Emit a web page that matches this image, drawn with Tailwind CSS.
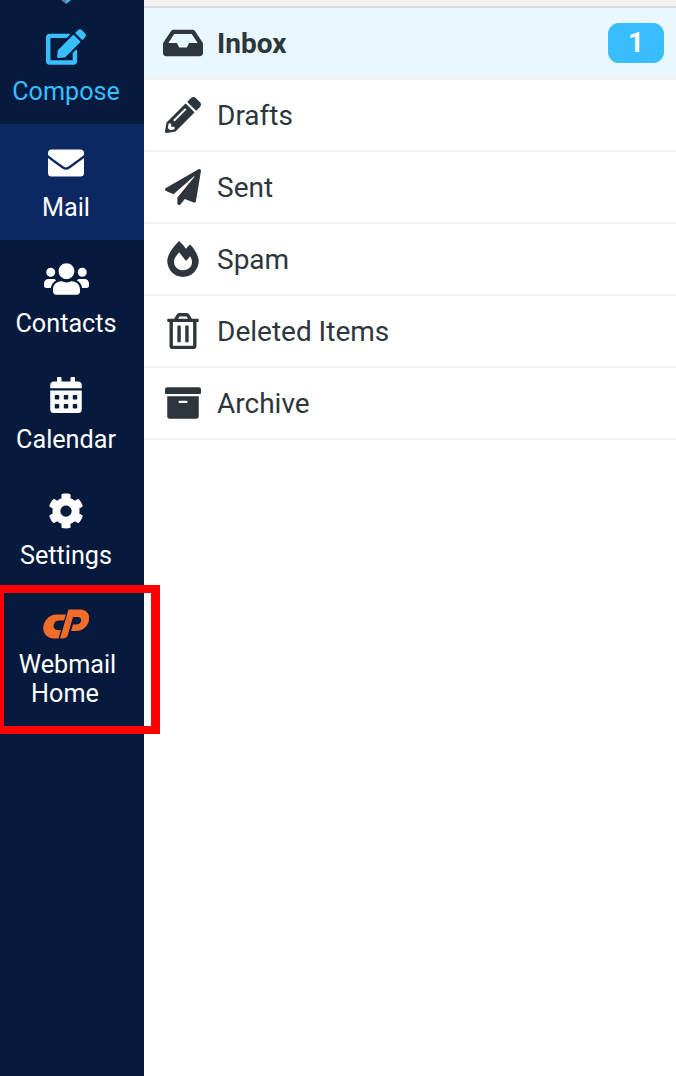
<!doctype html>
<html>
<head>
<meta charset="utf-8">
<script src="https://cdn.jsdelivr.net/npm/@tailwindcss/browser@4"></script>
</head>
<body class="m-0 overflow-hidden bg-white font-['Roboto',sans-serif]">
<div class="relative flex h-[1076px] w-[676px] overflow-hidden">
  <aside class="flex h-full w-[144px] shrink-0 flex-col bg-[#061a3d] pr-[12px] text-[25.2px] leading-[29px] text-white">
    <div class="flex h-2 shrink-0 justify-center">
      <svg class="h-[4px] w-[10px]" viewBox="0 0 10 4"><path d="M0 0h5v4z" fill="#6b7680"/><path d="M5 0h5L5 4z" fill="#38bdff"/></svg>
    </div>
    <a class="flex h-[116px] shrink-0 flex-col items-center pt-[21px] text-[#38bdff]">
      <svg class="h-[36px] w-[40px]" viewBox="0 0 576 512" fill="currentColor"><path d="M402.6 83.2l90.2 90.2c3.8 3.8 3.8 10 0 13.8L274.4 405.6l-92.8 10.3c-12.4 1.4-22.9-9.1-21.5-21.5l10.3-92.8L388.8 83.2c3.8-3.8 10-3.8 13.8 0zm162-22.9l-48.8-48.8c-15.2-15.2-39.9-15.2-55.2 0l-35.4 35.4c-3.8 3.8-3.8 10 0 13.8l90.2 90.2c3.8 3.8 10 3.8 13.8 0l35.4-35.4c15.2-15.3 15.2-40 0-55.2zM384 346.2V448H64V128h229.8c3.2 0 6.2-1.3 8.5-3.5l40-40c7.6-7.6 2.2-20.5-8.5-20.5H48C21.5 64 0 85.5 0 112v352c0 26.5 21.5 48 48 48h352c26.5 0 48-21.5 48-48V306.2c0-10.7-12.9-16-20.5-8.5l-40 40c-2.2 2.3-3.5 5.3-3.5 8.5z"/></svg>
      <span class="mt-[12px]">Compose</span>
    </a>
    <a class="-mr-[12px] flex h-[116px] shrink-0 flex-col items-center bg-[#0c2862] pr-[12px] pt-[21px]">
      <svg class="h-[36px] w-[36px]" viewBox="0 0 512 512" fill="currentColor"><path d="M502.3 190.8c3.9-3.1 9.7-.2 9.7 4.7V400c0 26.5-21.5 48-48 48H48c-26.5 0-48-21.5-48-48V195.6c0-5 5.7-7.8 9.7-4.7 22.4 17.4 52.1 39.5 154.1 113.6 21.1 15.4 56.7 47.8 92.2 47.6 35.7.3 72-32.8 92.3-47.6 102-74.1 131.6-96.3 154-113.7zM256 320c23.2.4 56.6-29.2 73.4-41.4 132.7-96.3 142.8-104.7 173.4-128.7 5.8-4.5 9.2-11.5 9.2-18.9v-19c0-26.5-21.5-48-48-48H48C21.5 64 0 85.5 0 112v19c0 7.4 3.4 14.3 9.2 18.9 30.6 23.9 40.7 32.4 173.4 128.7 16.8 12.2 50.2 41.8 73.4 41.4z"/></svg>
      <span class="mt-[12px]">Mail</span>
    </a>
    <a class="flex h-[116px] shrink-0 flex-col items-center pt-[21px]">
      <svg class="h-[36px] w-[45px]" viewBox="0 0 640 512" fill="currentColor"><path d="M96 224c35.3 0 64-28.7 64-64s-28.7-64-64-64-64 28.7-64 64 28.7 64 64 64zm448 0c35.3 0 64-28.7 64-64s-28.7-64-64-64-64 28.7-64 64 28.7 64 64 64zm32 32h-64c-17.6 0-33.5 7.1-45.1 18.6 40.3 22.1 68.9 62 75.1 109.4h66c17.7 0 32-14.3 32-32v-32c0-35.3-28.7-64-64-64zm-256 0c61.9 0 112-50.1 112-112S381.9 32 320 32 208 82.1 208 144s50.1 112 112 112zm76.8 32h-8.3c-20.8 10-43.9 16-68.5 16s-47.6-6-68.5-16h-8.3C179.6 288 128 339.6 128 403.2V432c0 26.5 21.5 48 48 48h288c26.5 0 48-21.5 48-48v-28.8c0-63.6-51.6-115.2-115.2-115.2zm-223.7-13.4C161.5 263.1 145.6 256 128 256H64c-35.3 0-64 28.7-64 64v32c0 17.7 14.3 32 32 32h65.9c6.3-47.4 34.9-87.3 75.2-109.4z"/></svg>
      <span class="mt-[12px]">Contacts</span>
    </a>
    <a class="flex h-[116px] shrink-0 flex-col items-center pt-[21px]">
      <svg class="h-[36px] w-[32px]" viewBox="0 0 448 512" fill="currentColor"><path d="M0 464c0 26.5 21.5 48 48 48h352c26.5 0 48-21.5 48-48V192H0v272zm320-196c0-6.6 5.4-12 12-12h40c6.6 0 12 5.4 12 12v40c0 6.6-5.4 12-12 12h-40c-6.6 0-12-5.4-12-12v-40zm0 128c0-6.6 5.4-12 12-12h40c6.6 0 12 5.4 12 12v40c0 6.6-5.4 12-12 12h-40c-6.6 0-12-5.4-12-12v-40zM192 268c0-6.6 5.4-12 12-12h40c6.6 0 12 5.4 12 12v40c0 6.6-5.4 12-12 12h-40c-6.6 0-12-5.4-12-12v-40zm0 128c0-6.6 5.4-12 12-12h40c6.6 0 12 5.4 12 12v40c0 6.6-5.4 12-12 12h-40c-6.6 0-12-5.4-12-12v-40zM64 268c0-6.6 5.4-12 12-12h40c6.6 0 12 5.4 12 12v40c0 6.6-5.4 12-12 12H76c-6.6 0-12-5.4-12-12v-40zm0 128c0-6.6 5.4-12 12-12h40c6.6 0 12 5.4 12 12v40c0 6.6-5.4 12-12 12H76c-6.6 0-12-5.4-12-12v-40zM400 64h-48V16c0-8.8-7.2-16-16-16h-32c-8.8 0-16 7.2-16 16v48H160V16c0-8.8-7.2-16-16-16h-32c-8.8 0-16 7.2-16 16v48H48C21.5 64 0 85.5 0 112v48h448v-48c0-26.5-21.5-48-48-48z"/></svg>
      <span class="mt-[12px]">Calendar</span>
    </a>
    <a class="flex h-[116px] shrink-0 flex-col items-center pt-[21px]">
      <svg class="h-[36px] w-[36px]" viewBox="0 0 512 512" fill="currentColor"><path d="M487.4 315.7l-42.6-24.6c4.3-23.2 4.3-47 0-70.2l42.6-24.6c4.9-2.8 7.1-8.6 5.5-14-11.1-35.6-30-67.8-54.7-94.6-3.8-4.1-10-5.1-14.8-2.3L380.8 110c-17.9-15.4-38.5-27.3-60.8-35.1V25.8c0-5.6-3.9-10.5-9.4-11.7-36.7-8.2-74.3-7.8-109.2 0-5.5 1.2-9.4 6.1-9.4 11.7V75c-22.2 7.9-42.8 19.8-60.8 35.1L88.7 85.5c-4.9-2.8-11-1.9-14.8 2.3-24.7 26.7-43.6 58.9-54.7 94.6-1.7 5.4.6 11.2 5.5 14L67.3 221c-4.3 23.2-4.3 47 0 70.2l-42.6 24.6c-4.9 2.8-7.1 8.6-5.5 14 11.1 35.6 30 67.8 54.7 94.6 3.8 4.1 10 5.1 14.8 2.3l42.6-24.6c17.9 15.4 38.5 27.3 60.8 35.1v49.2c0 5.6 3.9 10.5 9.4 11.7 36.7 8.2 74.3 7.8 109.2 0 5.5-1.2 9.4-6.1 9.4-11.7v-49.2c22.2-7.9 42.8-19.8 60.8-35.1l42.6 24.6c4.9 2.8 11 1.9 14.8-2.3 24.7-26.7 43.6-58.9 54.7-94.6 1.5-5.5-.7-11.3-5.6-14.1zM256 336c-44.1 0-80-35.9-80-80s35.9-80 80-80 80 35.9 80 80-35.9 80-80 80z"/></svg>
      <span class="mt-[12px]">Settings</span>
    </a>
    <a class="flex shrink-0 flex-col items-center pt-[21px]">
      <svg class="h-[30px] w-[46px]" viewBox="0 0 46 30" fill="#f26c2a"><path d="M23 5.5 21 11.5H16C13 11.5 11.5 13 10.8 15.5 10 18.5 11.5 21 14.5 21H18L15.5 29.5H11C4 29.5-1 24 .5 16.5 2 10 7.5 5.5 13.5 5.5Z"/><path d="M25.5.5H37C43 .5 47.5 5 46 11.5 44.5 18 39 22 33 22H28L30 15.5H33.5C36 15.5 37.5 14 38 12 38.5 9.5 37 8 35 8H30L24.5 27C24 28.5 22 29.5 19.5 29.5H17Z"/></svg>
      <span class="mt-[11px] pl-[3px]">Webmail</span>
      <span class="pr-[2px]">Home</span>
    </a>
  </aside>
  <main class="min-w-0 flex-1">
    <div class="h-2 border-b-2 border-[#d8dcdf] bg-[#f3f3f3]"></div>
    <ul class="text-[28px] text-[#2d363c]">
      <li class="flex h-[72px] items-center border-b-2 border-[#f2f2f2] bg-[#e9f7fe] pl-[19px] pr-[12px]">
        <svg class="h-[36px] w-[40px] shrink-0" viewBox="0 0 576 512" fill="currentColor"><path d="M567.938 243.908L462.25 85.374A48.003 48.003 0 0 0 422.311 64H153.689a48 48 0 0 0-39.938 21.374L8.062 243.908A47.994 47.994 0 0 0 0 270.533V400c0 26.51 21.49 48 48 48h480c26.51 0 48-21.49 48-48V270.533a47.994 47.994 0 0 0-8.062-26.625zM162.252 128h251.497l85.333 128H376l-32 64H232l-32-64H76.918l85.334-128z"/></svg>
        <span class="ml-[14px] pt-[2px] font-bold">Inbox</span>
        <span class="ml-auto flex h-[40px] w-[56px] items-center justify-center rounded-[11px] bg-[#38bdff] font-bold text-white">1</span>
      </li>
      <li class="flex h-[72px] items-center border-b-2 border-[#f2f2f2] pl-[21px]">
        <svg class="h-[36px] w-[36px] shrink-0" viewBox="0 0 512 512" fill="currentColor"><path d="M497.9 142.1l-46.1 46.1c-4.7 4.7-12.3 4.7-17 0l-111-111c-4.7-4.7-4.7-12.3 0-17l46.1-46.1c18.7-18.7 49.1-18.7 67.9 0l60.1 60.1c18.8 18.7 18.8 49.1 0 67.9zM284.2 99.8L21.6 362.4.4 483.9c-2.9 16.4 11.4 30.6 27.8 27.8l121.5-21.3 262.6-262.6c4.7-4.7 4.7-12.3 0-17l-111-111c-4.8-4.7-12.4-4.7-17.1 0zM124.1 339.9c-5.5-5.5-5.5-14.3 0-19.8l154-154c5.5-5.5 14.3-5.5 19.8 0s5.5 14.3 0 19.8l-154 154c-5.5 5.5-14.3 5.5-19.8 0zM88 424h48v36.3l-64.5 11.3-31.1-31.1L51.7 376H88v48z"/></svg>
        <span class="ml-[16px] pt-[2px]">Drafts</span>
      </li>
      <li class="flex h-[72px] items-center border-b-2 border-[#f2f2f2] pl-[21px]">
        <svg class="h-[36px] w-[36px] shrink-0" viewBox="0 0 512 512" fill="currentColor"><path d="M476 3.2L12.5 270.6c-18.1 10.4-15.8 35.6 2.2 43.2L121 358.4l287.3-253.2c5.5-4.9 13.3 2.6 8.6 8.3L176 407v80.5c0 23.6 28.5 32.9 42.5 15.8L282 426l124.6 52.2c14.2 6 30.4-2.9 33-18.2l72-432C515 7.8 493.3-6.8 476 3.2z"/></svg>
        <span class="ml-[16px] pt-[2px]">Sent</span>
      </li>
      <li class="flex h-[72px] items-center border-b-2 border-[#f2f2f2] pl-[23px]">
        <svg class="h-[36px] w-[32px] shrink-0" viewBox="0 0 448 512" fill="currentColor"><path d="M323.56 51.2c-20.8 19.3-39.58 39.59-56.22 59.97C240.08 73.62 206.28 35.53 168 0 69.74 91.17 0 209.96 0 281.6 0 408.85 100.29 512 224 512s224-103.15 224-230.4c0-53.27-51.98-163.14-124.44-230.4zm-19.47 340.65C282.43 407.01 255.72 416 226.86 416 154.71 416 96 368.26 96 290.75c0-38.61 24.31-72.63 72.79-130.75 6.93 7.98 98.83 125.34 98.83 125.34l58.63-66.88c4.14 6.85 7.91 13.55 11.27 19.97 27.35 52.19 15.81 118.97-33.43 153.42z"/></svg>
        <span class="ml-[18px] pt-[2px]">Spam</span>
      </li>
      <li class="flex h-[72px] items-center border-b-2 border-[#f2f2f2] pl-[23px]">
        <svg class="h-[36px] w-[32px] shrink-0" viewBox="0 0 448 512" fill="currentColor"><path d="M268 416h24a12 12 0 0 0 12-12V188a12 12 0 0 0-12-12h-24a12 12 0 0 0-12 12v216a12 12 0 0 0 12 12zM432 80h-82.41l-34-56.7A48 48 0 0 0 274.41 0H173.59a48 48 0 0 0-41.16 23.3L98.41 80H16A16 16 0 0 0 0 96v16a16 16 0 0 0 16 16h16v336a48 48 0 0 0 48 48h288a48 48 0 0 0 48-48V128h16a16 16 0 0 0 16-16V96a16 16 0 0 0-16-16zM171.84 50.91A6 6 0 0 1 177 48h94a6 6 0 0 1 5.15 2.91L293.61 80H154.39zM368 464H80V128h288zm-212-48h24a12 12 0 0 0 12-12V188a12 12 0 0 0-12-12h-24a12 12 0 0 0-12 12v216a12 12 0 0 0 12 12z"/></svg>
        <span class="ml-[18px] pt-[2px]">Deleted Items</span>
      </li>
      <li class="flex h-[72px] items-center border-b-2 border-[#f2f2f2] pl-[21px]">
        <svg class="h-[36px] w-[36px] shrink-0" viewBox="0 0 512 512" fill="currentColor"><path d="M32 448c0 17.7 14.3 32 32 32h384c17.7 0 32-14.3 32-32V160H32v288zm160-212c0-6.6 5.4-12 12-12h104c6.6 0 12 5.4 12 12v8c0 6.6-5.4 12-12 12H204c-6.6 0-12-5.4-12-12v-8zM480 32H32C14.3 32 0 46.3 0 64v48c0 8.8 7.2 16 16 16h480c8.8 0 16-7.2 16-16V64c0-17.7-14.3-32-32-32z"/></svg>
        <span class="ml-[16px] pt-[2px]">Archive</span>
      </li>
    </ul>
  </main>
  <div class="pointer-events-none absolute left-0 top-[585px] h-[149px] w-[160px] border-y-[8px] border-l-[4px] border-r-[9px] border-[#ff0000]"></div>
</div>
</body>
</html>
